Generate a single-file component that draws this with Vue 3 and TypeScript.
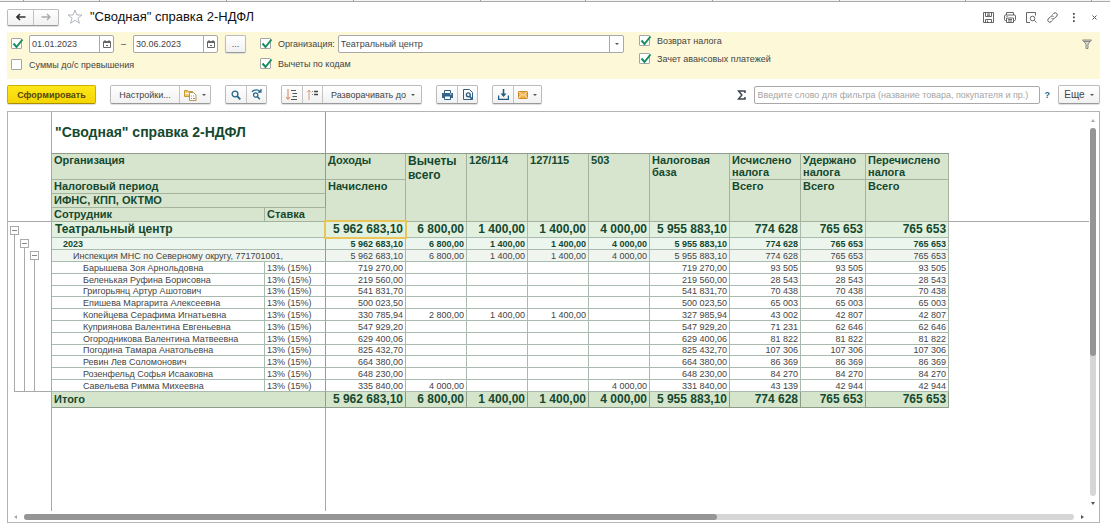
<script setup lang="ts">
import { ref } from 'vue'

interface Employee {
  name: string
  values: string[]
}

const dateFrom = ref('01.01.2023')
const dateTo = ref('30.06.2023')
const organization = ref('Театральный центр')
const query = ref('')
const usePeriod = ref(true)
const overLimit = ref(false)
const useOrganization = ref(true)
const byCodes = ref(true)
const taxRefund = ref(true)
const advance = ref(true)

const tabs = [24, 76, 127, 127, 127, 105, 127, 127, 126, 126]
const columnWidths = [213, 61, 80, 61, 61, 61, 61, 80, 71, 65, 83]
const codes = ['126/114', '127/115', '503']
const taxes = ['Исчислено налога', 'Удержано налога', 'Перечислено налога']

const totals = ['5 962 683,10', '6 800,00', '1 400,00', '1 400,00', '4 000,00', '5 955 883,10', '774 628', '765 653', '765 653']

const rate = '13% (15%)'
const employees: Employee[] = [
  { name: 'Барышева Зоя Арнольдовна', values: ['719 270,00', '', '', '', '', '719 270,00', '93 505', '93 505', '93 505'] },
  { name: 'Беленькая Руфина Борисовна', values: ['219 560,00', '', '', '', '', '219 560,00', '28 543', '28 543', '28 543'] },
  { name: 'Григорьянц Артур Ашотович', values: ['541 831,70', '', '', '', '', '541 831,70', '70 438', '70 438', '70 438'] },
  { name: 'Епишева Маргарита Алексеевна', values: ['500 023,50', '', '', '', '', '500 023,50', '65 003', '65 003', '65 003'] },
  { name: 'Копейцева Серафима Игнатьевна', values: ['330 785,94', '2 800,00', '1 400,00', '1 400,00', '', '327 985,94', '43 002', '42 807', '42 807'] },
  { name: 'Куприянова Валентина Евгеньевна', values: ['547 929,20', '', '', '', '', '547 929,20', '71 231', '62 646', '62 646'] },
  { name: 'Огородникова Валентина Матвеевна', values: ['629 400,06', '', '', '', '', '629 400,06', '81 822', '81 822', '81 822'] },
  { name: 'Погодина Тамара Анатольевна', values: ['825 432,70', '', '', '', '', '825 432,70', '107 306', '107 306', '107 306'] },
  { name: 'Ревин Лев Соломонович', values: ['664 380,00', '', '', '', '', '664 380,00', '86 369', '86 369', '86 369'] },
  { name: 'Розенфельд Софья Исааковна', values: ['648 230,00', '', '', '', '', '648 230,00', '84 270', '84 270', '84 270'] },
  { name: 'Савельева Римма Михеевна', values: ['335 840,00', '4 000,00', '', '', '4 000,00', '331 840,00', '43 139', '42 944', '42 944'] },
]
</script>

<template>
  <div class="window">
    <div class="tabs"><span v-for="(w, i) in tabs" :key="i" :style="{ flexBasis: w + 'px' }"></span></div>

    <header class="titlebar">
      <div class="group nav">
        <button type="button" aria-label="Назад">
          <svg width="10" height="8" viewBox="0 0 10 8"><path d="M4 1 1 4l3 3M1 4h8.500" fill="none" stroke="#333" stroke-width="1.700" /></svg>
        </button>
        <button type="button" aria-label="Вперед">
          <svg width="10" height="8" viewBox="0 0 10 8"><path d="M6 1l3 3-3 3M9 4H.5" fill="none" stroke="#aaa" stroke-width="1.300" /></svg>
        </button>
      </div>
      <button type="button" class="plain" aria-label="В избранное">
        <svg width="16" height="16" viewBox="0 0 16 16"><path d="M8 1l1.900 5h5.100l-4.100 3.100 1.600 5.200L8 11.200l-4.500 3.100 1.600-5.200L1 6h5.100z" fill="#fff" stroke="#a9afb5" stroke-width=".9" /></svg>
      </button>
      <h1>"Сводная" справка 2-НДФЛ</h1>
      <div class="actions">
        <button type="button" class="plain" aria-label="Сохранить">
          <svg width="11" height="11" viewBox="0 0 11 11" fill="none" stroke="#555"><path d="M.5.5h10v10h-10zM2.500.5v4h6v-4M2.500 10.500v-3h6v3M4 2h3M4 3.300h3M4.500 8.500v2" stroke-width=".9" /></svg>
        </button>
        <button type="button" class="plain" aria-label="Печать">
          <svg width="12" height="11" viewBox="0 0 12 11" fill="none" stroke="#555"><path d="M2.500 3V.5h7V3M2.500 8.500H1.500a1 1 0 0 1-1-1V4a1 1 0 0 1 1-1h9a1 1 0 0 1 1 1v3.500a1 1 0 0 1-1 1h-1M2.500 6h7v4.500h-7zM4 7.500h4M4 9h4M2.500 4.500h1" stroke-width=".9" /></svg>
        </button>
        <button type="button" class="plain" aria-label="Просмотр">
          <svg width="11" height="11" viewBox="0 0 11 11" fill="none" stroke="#555"><path d="M4 10.500H.5V.5h9v3M8.300 8.300l2.200 2.200" stroke-width=".9" /><circle cx="6.500" cy="6.500" r="2.300" stroke-width=".9" /></svg>
        </button>
        <button type="button" class="plain" aria-label="Ссылка">
          <svg width="11" height="11" viewBox="0 0 11 11" fill="none" stroke="#555"><path d="M4.500 6.500a2 2 0 0 0 2.800 0l2.500-2.500A2 2 0 0 0 7 1.200L5.600 2.600M6.500 4.500a2 2 0 0 0-2.800 0L1.200 7A2 2 0 0 0 4 9.800l1.400-1.400" /></svg>
        </button>
        <button type="button" class="plain" aria-label="Меню">
          <svg width="11" height="11" viewBox="0 0 11 11" fill="#444"><path d="M5 1h1.700v1.700H5zM5 4.600h1.700v1.700H5zM5 8.200h1.700v1.700H5z" /></svg>
        </button>
        <button type="button" class="plain" aria-label="Закрыть">
          <svg width="11" height="11" viewBox="0 0 11 11"><path d="M3.500 3.500l4 4M7.500 3.500l-4 4" stroke="#555" /></svg>
        </button>
      </div>
    </header>

    <section class="filters">
      <div class="col period">
        <div class="line tall">
          <span class="check">
            <input v-model="usePeriod" type="checkbox" aria-label="Период" />
            <svg v-if="usePeriod" width="13" height="12" viewBox="0 0 13 12"><path d="M2.500 5.500l3 3.500L11.500 1.500" /></svg>
          </span>
          <div class="field date">
            <input v-model="dateFrom" type="text" aria-label="Начало периода" />
            <button type="button" aria-label="Выбрать начало">
              <svg width="8" height="8" viewBox="0 0 8 8"><path d="M.5 1.500h7v6h-7zM.5 2.500h7M2 0v2M6 0v2M3 5.500h2" fill="none" stroke="#666" /></svg>
            </button>
          </div>
          <span class="dash">–</span>
          <div class="field date">
            <input v-model="dateTo" type="text" aria-label="Конец периода" />
            <button type="button" aria-label="Выбрать конец">
              <svg width="8" height="8" viewBox="0 0 8 8"><path d="M.5 1.500h7v6h-7zM.5 2.500h7M2 0v2M6 0v2M3 5.500h2" fill="none" stroke="#666" /></svg>
            </button>
          </div>
          <div class="group more"><button type="button">...</button></div>
        </div>
        <label class="line">
          <span class="check">
            <input v-model="overLimit" type="checkbox" />
            <svg v-if="overLimit" width="13" height="12" viewBox="0 0 13 12"><path d="M2.500 5.500l3 3.500L11.500 1.500" /></svg>
          </span>
          Суммы до/с превышения
        </label>
      </div>

      <div class="col org">
        <div class="line tall">
          <label class="line">
            <span class="check">
              <input v-model="useOrganization" type="checkbox" />
              <svg v-if="useOrganization" width="13" height="12" viewBox="0 0 13 12"><path d="M2.500 5.500l3 3.500L11.500 1.500" /></svg>
            </span>
            Организация:
          </label>
          <div class="field wide">
            <input v-model="organization" type="text" aria-label="Организация" />
            <button type="button" aria-label="Выбрать организацию"><i class="caret"></i></button>
          </div>
        </div>
        <label class="line">
          <span class="check">
            <input v-model="byCodes" type="checkbox" />
            <svg v-if="byCodes" width="13" height="12" viewBox="0 0 13 12"><path d="M2.500 5.500l3 3.500L11.500 1.500" /></svg>
          </span>
          Вычеты по кодам
        </label>
      </div>

      <div class="col extra">
        <label class="line">
          <span class="check">
            <input v-model="taxRefund" type="checkbox" />
            <svg v-if="taxRefund" width="13" height="12" viewBox="0 0 13 12"><path d="M2.500 5.500l3 3.500L11.500 1.500" /></svg>
          </span>
          Возврат налога
        </label>
        <label class="line">
          <span class="check">
            <input v-model="advance" type="checkbox" />
            <svg v-if="advance" width="13" height="12" viewBox="0 0 13 12"><path d="M2.500 5.500l3 3.500L11.500 1.500" /></svg>
          </span>
          Зачет авансовых платежей
        </label>
      </div>

      <button type="button" class="plain funnel" aria-label="Отбор">
        <svg width="10" height="10" viewBox="0 0 10 10"><path d="M.5 1h9L6 5v4.500H4V5z" fill="#dcdccb" stroke="#888" /><path d="M2 2.500h6" stroke="#888" /></svg>
      </button>
    </section>

    <div class="toolbar">
      <button type="button" class="primary">Сформировать</button>

      <div class="group">
        <button type="button" class="settings">Настройки...</button>
        <button type="button" class="drop" aria-label="Варианты настроек">
          <svg width="13" height="12" viewBox="0 0 13 12"><path d="M.5 1.500h3l1 1h4v5h-8z" fill="#efc763" stroke="#c99a35" /><path d="M1 4.500h7" stroke="#fff" /><path d="M5.500 3.500h4l2.500 2.500v5.500H5.500z" fill="#fff" stroke="#a98b4a" stroke-width=".9" /><path d="M7 9.500h1M9 9.500h2M7 7h1M9 7h1" stroke="#a98b4a" /></svg>
          <i class="caret"></i>
        </button>
      </div>

      <div class="group tools">
        <button type="button" aria-label="Найти">
          <svg width="10" height="10" viewBox="0 0 10 10" fill="none" stroke="#22668f"><circle cx="4" cy="4" r="2.900" stroke-width="1.300" /><path d="M6 6l3.300 3.300" stroke-width="1.800" /></svg>
        </button>
        <button type="button" aria-label="Найти следующее">
          <svg width="11" height="11" viewBox="0 0 11 11" fill="none" stroke="#22668f"><circle cx="4.700" cy="6" r="2.200" stroke-width="1.200" /><path d="M6.200 7.500l2.600 2.800" stroke-width="1.500" /><path d="M.8 2.800C3.500.5 7 .6 9.500 2.500M10 0v3.200H7" stroke-width="1.200" /></svg>
        </button>
      </div>

      <div class="group tools">
        <button type="button" aria-label="Развернуть">
          <svg width="12" height="12" viewBox="0 0 12 12" fill="none"><path d="M2 0v10M0 8l2 2.500L4 8" stroke="#dd8156" /><path d="M5 1.500h5M6.500 4.500H11M6.500 7.500H11M5 10.500h6" stroke="#555" /></svg>
        </button>
        <button type="button" aria-label="Свернуть">
          <svg width="12" height="12" viewBox="0 0 12 12" fill="none"><path d="M2 11V1M0 3.500L2 1l2 2.500" stroke="#dd9a76" /><path d="M5 2.500h1M5 5.500h1" stroke="#888" /><path d="M7 2.500h4M7 5.500h4" stroke="#444" stroke-width="1.300" /></svg>
        </button>
        <button type="button" class="drop expand">Разворачивать до<i class="caret"></i></button>
      </div>

      <div class="group tools">
        <button type="button" aria-label="Напечатать">
          <svg width="11" height="10" viewBox="0 0 11 10"><path d="M2.500 3V.5h6V3" fill="#fff" stroke="#2d5f86" /><path d="M0 3h11v5H0z" fill="#35668c" /><path d="M2.500 6h6v3.500h-6z" fill="#fff" stroke="#2d5f86" /><path d="M8 4h1.500" stroke="#fff" /></svg>
        </button>
        <button type="button" aria-label="Предварительный просмотр">
          <svg width="10" height="11" viewBox="0 0 10 11" fill="none" stroke="#2d5f86"><path d="M9.500 10.500h-9V.5h6l3 3z" /><circle cx="5.300" cy="5.800" r="1.900" stroke-width="1.400" /><path d="M6.500 7.200l3 3.200" stroke-width="1.600" /></svg>
        </button>
      </div>

      <div class="group tools">
        <button type="button" aria-label="Сохранить отчет">
          <svg width="11" height="11" viewBox="0 0 11 11"><path d="M.6 6.500v3.800h9.800V6.500" fill="none" stroke="#235a80" stroke-width="1.300" /><path d="M4.700 0h1.600v4.500h2.200L5.500 8 2.500 4.500h2.200z" fill="#235a80" /></svg>
        </button>
        <button type="button" class="drop" aria-label="Отправить">
          <svg width="10" height="8" viewBox="0 0 10 8"><path d="M.5.5h9v7h-9z" fill="#efb24f" stroke="#cd8c2b" /><path d="M.5.5L5 4.500 9.500.5M.5 7.500l3-4M9.500 7.500l-3-4" fill="none" stroke="#fff2d0" stroke-width=".8" /></svg>
          <i class="caret"></i>
        </button>
      </div>

      <button type="button" class="plain sum" aria-label="Сумма">
        <svg width="9" height="10" viewBox="0 0 9 10"><path d="M8 3V1H1.500l3.300 4-3.300 4H8V7" fill="none" stroke="#3c4650" stroke-width="1.500" /></svg>
      </button>
      <input v-model="query" class="search" type="text" aria-label="Фильтр" placeholder="Введите слово для фильтра (название товара, покупателя и пр.)" />
      <a class="help" href="#">?</a>
      <div class="group"><button type="button" class="drop rest-menu">Еще<i class="caret"></i></button></div>
    </div>

    <section class="report">
      <div class="sheet">
        <div class="gutter">
          <div class="gutter-head"></div>
          <div class="tree">
            <div v-for="n in 3" :key="n" class="level" :class="'level-' + n">
              <button type="button" aria-label="Свернуть группу"></button>
              <span></span>
            </div>
          </div>
        </div>

        <div class="pane">
          <table>
            <colgroup>
              <col v-for="(w, i) in columnWidths" :key="i" :style="{ width: w + 'px' }" />
              <col />
            </colgroup>
            <thead>
              <tr class="caption">
                <th colspan="2">"Сводная" справка 2-НДФЛ</th>
                <td colspan="9"></td>
                <td class="filler"></td>
              </tr>
              <tr class="first">
                <th colspan="2">Организация</th>
                <th>Доходы</th>
                <th rowspan="4" class="large">Вычеты всего</th>
                <th v-for="c in codes" :key="c" rowspan="4">{{ c }}</th>
                <th rowspan="4">Налоговая база</th>
                <th v-for="t in taxes" :key="t">{{ t }}</th>
                <td rowspan="4" class="filler edge"></td>
              </tr>
              <tr>
                <th colspan="2">Налоговый период</th>
                <th rowspan="3">Начислено</th>
                <th v-for="t in taxes" :key="t" rowspan="3">Всего</th>
              </tr>
              <tr><th colspan="2">ИФНС, КПП, ОКТМО</th></tr>
              <tr>
                <th>Сотрудник</th>
                <th>Ставка</th>
              </tr>
            </thead>
            <tbody>
              <tr class="company">
                <th colspan="2">Театральный центр</th>
                <td v-for="(v, i) in totals" :key="i" :class="{ selected: i === 0 }">{{ v }}</td>
              </tr>
              <tr class="year">
                <th colspan="2">2023</th>
                <td v-for="(v, i) in totals" :key="i">{{ v }}</td>
              </tr>
              <tr class="office">
                <th colspan="2">Инспекция МНС по Северному округу, 771701001,</th>
                <td v-for="(v, i) in totals" :key="i">{{ v }}</td>
              </tr>
            </tbody>
            <tbody class="people">
              <tr v-for="e in employees" :key="e.name">
                <th>{{ e.name }}</th>
                <td class="rate">{{ rate }}</td>
                <td v-for="(v, i) in e.values" :key="i">{{ v }}</td>
              </tr>
            </tbody>
            <tfoot>
              <tr>
                <th colspan="2">Итого</th>
                <td v-for="(v, i) in totals" :key="i">{{ v }}</td>
              </tr>
            </tfoot>
          </table>
          <div class="blank"></div>
        </div>

        <div class="vbar">
          <i class="arrow up"></i>
          <div class="track"><div class="thumb"></div></div>
          <i class="arrow down"></i>
        </div>
      </div>
      <div class="hbar">
        <i class="arrow left"></i>
        <div class="track"><div class="thumb"></div></div>
        <i class="arrow right"></i>
      </div>
    </section>
  </div>
</template>

<style>
body {
  margin: 0;
  background: #fff;
}
</style>

<style scoped>
* {
  box-sizing: border-box;
}
.window {
  display: flex;
  flex-direction: column;
  min-height: 100vh;
  padding-bottom: 6px;
  font: 9px/12px "Liberation Sans", Arial, sans-serif;
  color: #444;
}
button,
input {
  font: inherit;
  color: inherit;
  margin: 0;
}
button {
  display: flex;
  align-items: center;
  justify-content: center;
  padding: 0;
  border: 0;
  background: none;
}
svg {
  display: block;
  flex: none;
}
.tabs {
  display: flex;
  height: 2px;
  background: #f4f4f4;
  border-bottom: 1px solid #aaa;
}
.tabs span {
  flex: 0 0 auto;
  border-right: 1px solid #999;
}

/* title bar */
.titlebar {
  display: flex;
  align-items: center;
  height: 30px;
  padding: 0 10px 0 7px;
}
.group {
  display: flex;
  height: 19px;
  border: 1px solid #bcbcbc;
  border-bottom-color: #999;
  border-radius: 2px;
  background: linear-gradient(#fff, #f1f1f1);
  box-shadow: 0 1px 1px #ddd;
}
.group > button + button {
  border-left: 1px solid #c4c4c4;
}
.nav {
  height: 17px;
  margin-right: 8px;
}
.nav button {
  width: 25px;
}
h1 {
  flex: 1;
  margin: 0 0 0 7px;
  font: 13px/18px "Liberation Sans", Arial, sans-serif;
  color: #111;
}
.actions {
  display: flex;
  gap: 10px;
}

/* filter panel */
.filters {
  display: flex;
  margin: 0 10px 0 7px;
  padding: 3px 8px 8px 4px;
  background: #fdf8d8;
}
.col {
  display: flex;
  flex-direction: column;
}
.period {
  gap: 6px;
  margin-right: 14px;
}
.org {
  flex: 0 1 364px;
  gap: 5px;
  margin-right: 15px;
}
.extra {
  flex: 1;
  gap: 6px;
}
.line {
  display: flex;
  align-items: center;
  white-space: nowrap;
}
.tall {
  height: 18px;
}
.check {
  display: grid;
  width: 11px;
  height: 12px;
  margin-right: 7px;
}
.check > * {
  grid-area: 1 / 1;
}
.check input {
  appearance: none;
  width: 11px;
  height: 11px;
  border: 1px solid #a5a5a5;
  border-radius: 1px;
  background: #fff;
}
.check svg {
  pointer-events: none;
}
.check path {
  fill: none;
  stroke: #15905c;
  stroke-width: 2;
}
.field {
  display: flex;
  height: 18px;
  border: 1px solid #a9a9a9;
  border-radius: 2px;
  background: #fff;
}
.field input {
  flex: 1;
  min-width: 0;
  padding: 0 2px;
  border: 0;
  background: none;
  outline: 0;
}
.field button {
  width: 14px;
  border-left: 1px solid #a9a9a9;
}
.date {
  width: 85px;
}
.dash {
  width: 19px;
  text-align: center;
}
.more {
  height: 18px;
  margin-left: 7px;
}
.more button {
  width: 19px;
}
.wide {
  flex: 1;
  margin-left: 3px;
}
.funnel {
  align-self: flex-start;
  margin-top: 4px;
}
.caret {
  border: 2px solid transparent;
  border-top-color: #555;
  border-bottom-width: 0;
}

/* toolbar */
.toolbar {
  display: flex;
  align-items: center;
  gap: 14px;
  margin: 6px 10px 7px 7px;
}
.primary {
  width: 89px;
  height: 19px;
  border: 1px solid #cfae00;
  border-bottom-color: #a88e00;
  border-radius: 2px;
  background: linear-gradient(#ffe71a, #f5d500);
  box-shadow: 0 1px 1px #ddd;
  font-weight: bold;
  color: #55490a;
}
.settings {
  width: 68px;
}
.drop {
  gap: 5px;
  padding: 0 4px;
}
.tools > button:not(.drop) {
  width: 20px;
}
.tools > .expand {
  padding: 0 6px 0 8px;
}
.sum {
  margin-left: auto;
}
.search {
  flex: 0 1 286px;
  min-width: 80px;
  height: 18px;
  margin-left: -6px;
  padding: 0 3px;
  border: 1px solid #a9a9a9;
  border-radius: 2px;
}
.search::placeholder {
  color: #a5a5a5;
}
.help {
  margin: 0 -6px 0 -9px;
  color: #22668f;
  font-weight: bold;
  text-decoration: none;
}
.rest-menu {
  width: 40px;
  font-size: 10px;
}

/* report */
.report {
  display: flex;
  flex: 1;
  flex-direction: column;
  margin: 0 10px 0 7px;
  border: 1px solid #b4b4b4;
}
.sheet {
  display: flex;
  flex: 1;
}
.gutter {
  width: 44px;
  border-right: 1px solid #a8a8a8;
}
.gutter-head {
  height: 110px;
  border-bottom: 1px solid #a8a8a8;
}
.tree {
  display: flex;
  gap: 1px;
  height: 170px;
  padding: 4px 0 0 2px;
}
.level {
  display: flex;
  flex-direction: column;
  align-items: center;
}
.level-2 {
  padding-top: 13px;
}
.level-3 {
  flex: 1;
  align-items: flex-start;
  padding-top: 25px;
}
.level button {
  width: 9px;
  height: 9px;
  border: 1px solid #aaa;
}
.level button::before {
  content: "";
  width: 5px;
  border-top: 1px solid #888;
}
.level span {
  flex: 1;
  align-self: stretch;
  margin-left: 4px;
  margin-right: -5px;
  border: solid #aaa;
  border-width: 0 0 1px 1px;
}
.level-3 span {
  margin-right: 0;
}
.pane {
  display: flex;
  flex: 1;
  flex-direction: column;
  min-width: 0;
}
table {
  width: 100%;
  table-layout: fixed;
  border-collapse: separate;
  border-spacing: 0;
}
th,
td {
  padding: 0 2px;
  border: solid #a9bbaf;
  border-width: 0 1px 1px 0;
  line-height: 10px;
  white-space: nowrap;
}
th {
  text-align: left;
  color: #14492f;
}
td {
  text-align: right;
}
thead th {
  height: 14px;
  border-color: #a3b39d;
  background: #d8e5ce;
  font-size: 11px;
  line-height: 13px;
  vertical-align: top;
  white-space: normal;
}
.first th {
  height: 26px;
  line-height: 12px;
}
.first th.large {
  font-size: 12px;
  line-height: 14px;
}
.caption th {
  height: 42px;
  padding-left: 3px;
  border-color: #a8a8a8;
  border-bottom-color: #8e9d89;
  background: none;
  font-size: 14px;
  vertical-align: middle;
}
.caption td {
  border-right: 0;
  border-bottom-color: #8e9d89;
}
.caption .filler {
  border: 0;
}
.filler.edge {
  border-width: 0 0 1px;
  border-color: #a8a8a8;
}
.company > * {
  height: 16px;
  background: #e2f0df;
  font-size: 12px;
  font-weight: bold;
  line-height: 15px;
  color: #14492f;
}
.company th {
  padding-left: 3px;
}
.company .selected {
  position: relative;
}
.selected::after {
  content: "";
  position: absolute;
  inset: -2px;
  border: 2px solid #eac65a;
}
.year > * {
  height: 12px;
  background: #edf5ef;
  font-weight: bold;
  color: #14492f;
}
.year th {
  padding-left: 11px;
}
.office > * {
  height: 12px;
  background: #f0f5f0;
}
.office th {
  padding-left: 21px;
  font-weight: normal;
  color: #444;
}
.people th {
  padding-left: 31px;
  font-weight: normal;
  color: #444;
}
.people th,
.people td {
  height: 12px;
}
.people tr:nth-child(5n + 3) > * {
  height: 11px;
}
.people .rate {
  text-align: left;
}
tfoot th,
tfoot td {
  height: 16px;
  border-color: #8e9d89;
  background: #d5e5cb;
  font-size: 12px;
  font-weight: bold;
  line-height: 15px;
  color: #14492f;
}
tfoot th {
  font-size: 11px;
}
tr > :nth-child(1)[colspan="2"],
.people .rate {
  border-right-color: #8f9d95;
}
.blank {
  flex: 1;
  width: 274px;
  border-right: 1px solid #a8a8a8;
}

/* scroll bars */
.vbar {
  display: flex;
  flex-direction: column;
  align-items: center;
  gap: 6px;
  width: 10px;
  padding: 7px 3px 6px 1px;
}
.vbar .track {
  flex: 1;
  width: 6px;
}
.track {
  border-radius: 3px;
  background: #d6d6d6;
}
.thumb {
  border-radius: 3px;
  background: #959595;
}
.vbar .thumb {
  height: 62%;
}
.hbar {
  display: flex;
  align-items: center;
  gap: 7px;
  height: 11px;
  padding: 0 15px 0 6px;
}
.hbar .track {
  flex: 1;
}
.hbar .thumb {
  width: 66%;
  height: 6px;
}
.arrow {
  border: 2px solid transparent;
}
.up {
  border-bottom: 3px solid #aaa;
  border-top: 0;
}
.down {
  border-top: 3px solid #555;
  border-bottom: 0;
}
.left {
  border-right: 3px solid #aaa;
  border-left: 0;
}
.right {
  border-left: 3px solid #555;
  border-right: 0;
}
</style>
